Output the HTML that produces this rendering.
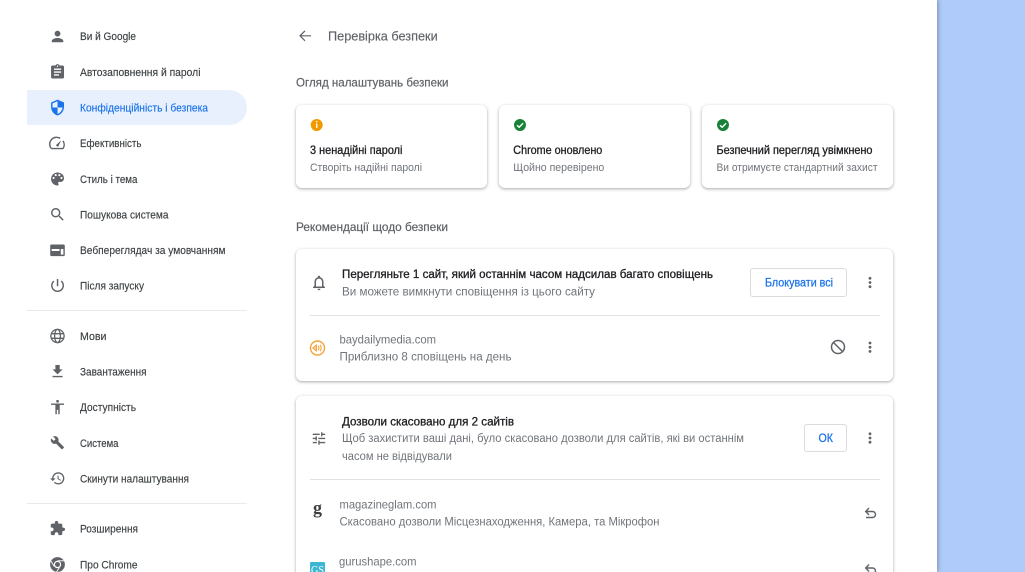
<!DOCTYPE html>
<html lang="uk"><head><meta charset="utf-8"><title>Перевірка безпеки</title>
<style>
html,body{margin:0;padding:0;width:1025px;height:572px;overflow:hidden;background:#aecbfa}
#page{position:absolute;left:0;top:0;width:937px;height:572px;background:#fff;box-shadow:1px 0 4px rgba(60,64,67,.45);overflow:hidden}
.c{position:absolute;background:#fff;border-radius:6px;box-shadow:0 1px 3px 1px rgba(60,64,67,.12),0 1px 2px rgba(60,64,67,.3)}
.sel{position:absolute;left:27px;top:90px;width:220px;height:35px;background:#e8f0fe;border-radius:0 18px 18px 0}
.hr{position:absolute;height:1px;background:#e8eaed}
.b{position:absolute;border:1px solid #dadce0;border-radius:3px;box-sizing:border-box;background:#fff}
svg{position:absolute;left:0;top:0;filter:blur(.25px)}
text{font-family:"Liberation Sans","Noto Sans CJK SC",sans-serif;font-size:10.5px}
.n{fill:#3c4043;font-size:11px;stroke:#3c4043;stroke-width:.15px}
.g{fill:#5f6368;font-size:12px}
.t{fill:#202124;font-size:11.5px;stroke:#202124;stroke-width:.3px}
.s{fill:#70757a;font-size:11px}
.i{fill:#5f6368}
</style></head><body>
<div id="page">
<div class="sel"></div>
<div class="hr" style="left:27px;top:310px;width:220px"></div>
<div class="hr" style="left:27px;top:503px;width:220px"></div>
<div class="c" style="left:296px;top:105px;width:191px;height:83px"></div>
<div class="c" style="left:499px;top:105px;width:191px;height:83px"></div>
<div class="c" style="left:702px;top:105px;width:191px;height:83px"></div>
<div class="c" style="left:296px;top:249px;width:597px;height:132px"></div>
<div class="c" style="left:296px;top:396px;width:597px;height:200px"></div>
<div class="hr" style="left:310px;top:315px;width:569.5px;background:#e0e2e6"></div>
<div class="hr" style="left:310px;top:479px;width:569.5px;background:#e0e2e6"></div>
<div class="b" style="left:750px;top:268px;width:97px;height:28.5px"></div>
<div class="b" style="left:804px;top:424px;width:43px;height:28px"></div>
<svg width="937" height="572" viewBox="0 0 937 572">
<!-- nav text -->
<text class="n" x="80" y="40" textLength="56" lengthAdjust="spacingAndGlyphs">Ви й Google</text>
<text class="n" x="80" y="76" textLength="120.5" lengthAdjust="spacingAndGlyphs">Автозаповнення й паролі</text>
<text class="n" x="80" y="111.5" textLength="128" lengthAdjust="spacingAndGlyphs" style="fill:#1a73e8;stroke:#1a73e8">Конфіденційність і безпека</text>
<text class="n" x="80" y="147" textLength="61.5" lengthAdjust="spacingAndGlyphs">Ефективність</text>
<text class="n" x="80" y="183" textLength="57.5" lengthAdjust="spacingAndGlyphs">Стиль і тема</text>
<text class="n" x="80" y="218.5" textLength="88.5" lengthAdjust="spacingAndGlyphs">Пошукова система</text>
<text class="n" x="80" y="254" textLength="145.5" lengthAdjust="spacingAndGlyphs">Вебпереглядач за умовчанням</text>
<text class="n" x="80" y="289.5" textLength="64" lengthAdjust="spacingAndGlyphs">Після запуску</text>
<text class="n" x="80" y="340" textLength="26.5" lengthAdjust="spacingAndGlyphs">Мови</text>
<text class="n" x="80" y="375.5" textLength="66.5" lengthAdjust="spacingAndGlyphs">Завантаження</text>
<text class="n" x="80" y="411" textLength="56" lengthAdjust="spacingAndGlyphs">Доступність</text>
<text class="n" x="80" y="447" textLength="38.5" lengthAdjust="spacingAndGlyphs">Система</text>
<text class="n" x="80" y="482.5" textLength="109" lengthAdjust="spacingAndGlyphs">Скинути налаштування</text>
<text class="n" x="80" y="532.5" textLength="58" lengthAdjust="spacingAndGlyphs">Розширення</text>
<text class="n" x="80" y="568.5" textLength="57.5" lengthAdjust="spacingAndGlyphs">Про Chrome</text>
<!-- nav icons -->
<g class="i">
<path transform="translate(48.9,27.9) scale(.72)" d="M12 12c2.21 0 4-1.79 4-4s-1.79-4-4-4-4 1.79-4 4 1.79 4 4 4zm0 2c-2.67 0-8 1.34-8 4v2h16v-2c0-2.66-5.33-4-8-4z"/>
<path transform="translate(48.9,63.4) scale(.72)" d="M19 3h-4.18C14.4 1.84 13.3 1 12 1c-1.3 0-2.4.84-2.82 2H5c-1.1 0-2 .9-2 2v14c0 1.1.9 2 2 2h14c1.1 0 2-.9 2-2V5c0-1.1-.9-2-2-2zm-7 0c.55 0 1 .45 1 1s-.45 1-1 1-1-.45-1-1 .45-1 1-1zm2 14H7v-2h7v2zm3-4H7v-2h10v2zm0-4H7V7h10v2z"/>
<path transform="translate(48.9,98.9) scale(.72)" fill="#1a73e8" d="M12 1L3 5v6c0 5.55 3.84 10.74 9 12 5.16-1.26 9-6.45 9-12V5l-9-4zm0 10.99h7c-.53 4.12-3.28 7.79-7 8.94V12H5V6.3l7-3.11v8.8z"/>
<path fill="none" stroke="#5f6368" stroke-width="1.4" d="M51.4 148.6H63M51.4 148.6A6.8 6.8 0 0 1 60.2 138.4M63 140.9A6.8 6.8 0 0 1 63 148.6"/>
<path d="M55.8 145.2 L61.2 140.4 L58 147 Z"/>
<path transform="translate(48.9,170.4) scale(.72)" d="M12 3c-4.97 0-9 4.03-9 9s4.03 9 9 9c.83 0 1.5-.67 1.5-1.5 0-.39-.15-.74-.39-1.01-.23-.26-.38-.61-.38-.99 0-.83.67-1.5 1.5-1.5H16c2.76 0 5-2.24 5-5 0-4.42-4.03-8-9-8zm-5.5 9c-.83 0-1.5-.67-1.5-1.5S5.67 9 6.5 9 8 9.67 8 10.5 7.33 12 6.5 12zm3-4C8.67 8 8 7.33 8 6.5S8.67 5 9.5 5s1.5.67 1.5 1.5S10.33 8 9.5 8zm5 0c-.83 0-1.5-.67-1.5-1.5S13.67 5 14.5 5s1.5.67 1.5 1.5S15.33 8 14.5 8zm3 4c-.83 0-1.5-.67-1.5-1.5S16.67 9 17.5 9s1.5.67 1.5 1.5-.67 1.5-1.5 1.5z"/>
<path transform="translate(48.9,205.9) scale(.72)" d="M15.5 14h-.79l-.28-.27C15.41 12.59 16 11.11 16 9.5 16 5.91 13.09 3 9.5 3S3 5.91 3 9.5 5.91 16 9.5 16c1.61 0 3.09-.59 4.23-1.57l.27.28v.79l5 4.99L20.49 19l-4.99-5zm-6 0C7.01 14 5 11.99 5 9.5S7.01 5 9.5 5 14 7.01 14 9.5 11.99 14 9.5 14z"/>
<path fill-rule="evenodd" d="M51.5 244.5h12a1.3 1.3 0 0 1 1.3 1.3v9a1.3 1.3 0 0 1-1.3 1.3h-12a1.3 1.3 0 0 1-1.3-1.3v-9a1.3 1.3 0 0 1 1.3-1.3zM51.7 249v2h7.8v-2zM60.8 249v5.6h2.6V249z"/>
<path transform="translate(48.9,276.9) scale(.72)" d="M13 3h-2v10h2V3zm4.83 2.17l-1.42 1.42C17.99 7.86 19 9.81 19 12c0 3.87-3.13 7-7 7s-7-3.13-7-7c0-2.19 1.01-4.14 2.58-5.42L6.17 5.17C4.23 6.82 3 9.26 3 12c0 4.97 4.03 9 9 9s9-4.03 9-9c0-2.74-1.23-5.18-3.17-6.83z"/>
<g fill="none" stroke="#5f6368" stroke-width="1.3"><circle cx="57.5" cy="336" r="6.6"/><ellipse cx="57.5" cy="336" rx="2.9" ry="6.6"/><path d="M51 333.7h13M51 338.3h13"/></g>
<path transform="translate(48.9,362.9) scale(.72)" d="M19 9h-4V3H9v6H5l7 7 7-7zM5 18v2h14v-2H5z"/>
<path transform="translate(48.9,398.4) scale(.72)" d="M12 2c1.1 0 2 .9 2 2s-.9 2-2 2-2-.9-2-2 .9-2 2-2zm9 7h-6v13h-2v-6h-2v6H9V9H3V7h18v2z"/>
<path transform="translate(50.2,435.5) scale(.6)" d="M22.7 19l-9.1-9.1c.9-2.3.4-5-1.5-6.9-2-2-5-2.4-7.4-1.3L9 6 6 9 1.6 4.7C.4 7.1.9 10.1 2.9 12.1c1.9 1.9 4.6 2.4 6.9 1.5l9.1 9.1c.4.4 1 .4 1.4 0l2.3-2.3c.5-.4.5-1.1.1-1.4z"/>
<path transform="translate(49.4,470.2) scale(.68)" d="M13 3c-4.97 0-9 4.03-9 9H1l3.89 3.89.07.14L9 12H6c0-3.87 3.13-7 7-7s7 3.13 7 7-3.13 7-7 7c-1.93 0-3.68-.79-4.94-2.06l-1.42 1.42C8.27 19.99 10.51 21 13 21c4.97 0 9-4.03 9-9s-4.03-9-9-9zm-1 5v5l4.28 2.54.72-1.21-3.5-2.08V8H12z"/>
<path transform="translate(49.4,520.2) scale(.68)" d="M20.5 11H19V7c0-1.1-.9-2-2-2h-4V3.5C13 2.12 11.88 1 10.5 1S8 2.12 8 3.5V5H4c-1.1 0-1.99.9-1.99 2v3.8H3.5c1.49 0 2.7 1.21 2.7 2.7s-1.21 2.7-2.7 2.7H2V20c0 1.1.9 2 2 2h3.8v-1.5c0-1.49 1.21-2.7 2.7-2.7 1.49 0 2.7 1.21 2.7 2.7V22H17c1.1 0 2-.9 2-2v-4h1.5c1.38 0 2.5-1.12 2.5-2.5S21.88 11 20.5 11z"/>
<circle cx="57.5" cy="564.5" r="7.4"/><circle cx="57.5" cy="564.5" r="3.7" fill="#fff"/><circle cx="57.5" cy="564.5" r="2.5"/>
<path d="M57.5 560.8h7" stroke="#fff" stroke-width=".9"/><path d="M54.2 566.4l-3.4-5.6" stroke="#fff" stroke-width=".9"/><path d="M59.3 567.7l-3.5 5.4" stroke="#fff" stroke-width=".9"/>
</g>
<!-- header -->
<path fill="none" stroke="#5f6368" stroke-width="1.2" d="M311 35.8H300.2M305 30.8l-5 5 5 5"/>
<text class="g" x="328" y="40.3" textLength="109.7" lengthAdjust="spacingAndGlyphs" style="font-size:12.5px;stroke:#5f6368;stroke-width:.15px">Перевірка безпеки</text>
<text class="g" x="296" y="86.7" textLength="152.5" lengthAdjust="spacingAndGlyphs" style="stroke:#5f6368;stroke-width:.2px">Огляд налаштувань безпеки</text>
<text class="g" x="296" y="231" textLength="152" lengthAdjust="spacingAndGlyphs" style="stroke:#5f6368;stroke-width:.2px">Рекомендації щодо безпеки</text>
<!-- summary cards -->
<circle cx="316.7" cy="125" r="6" fill="#f29900"/><path d="M316.7 121.6v.01" stroke="#fff" stroke-width="1.5" stroke-linecap="round"/><rect x="316" y="123.5" width="1.4" height="4.4" fill="#fff"/>
<text class="t" x="310" y="154" textLength="92.5" lengthAdjust="spacingAndGlyphs">3 ненадійні паролі</text>
<text class="s" x="310" y="171" textLength="112" lengthAdjust="spacingAndGlyphs">Створіть надійні паролі</text>
<circle cx="520" cy="125" r="6" fill="#188038"/><path d="M517 125.2l2.1 2.1 4-4" fill="none" stroke="#fff" stroke-width="1.4"/>
<text class="t" x="513.3" y="154" textLength="89" lengthAdjust="spacingAndGlyphs">Chrome оновлено</text>
<text class="s" x="513.3" y="171" textLength="91" lengthAdjust="spacingAndGlyphs">Щойно перевірено</text>
<circle cx="723" cy="125" r="6" fill="#188038"/><path d="M720 125.2l2.1 2.1 4-4" fill="none" stroke="#fff" stroke-width="1.4"/>
<text class="t" x="716.5" y="154" textLength="156" lengthAdjust="spacingAndGlyphs">Безпечний перегляд увімкнено</text>
<text class="s" x="716.5" y="171" textLength="161" lengthAdjust="spacingAndGlyphs">Ви отримуєте стандартний захист</text>
<!-- notifications card -->
<path class="i" transform="translate(310,273.8) scale(.75)" d="M12 22c1.1 0 2-.9 2-2h-4c0 1.1.9 2 2 2zm6-6v-5c0-3.07-1.63-5.64-4.5-6.32V4c0-.83-.67-1.5-1.5-1.5s-1.5.67-1.5 1.5v.68C7.64 5.36 6 7.92 6 11v5l-2 2v1h16v-1l-2-2zm-2 1H8v-6c0-2.48 1.51-4.5 4-4.5s4 2.02 4 4.5v6z"/>
<text class="t" x="342" y="278" textLength="371" lengthAdjust="spacingAndGlyphs">Перегляньте 1 сайт, який останнім часом надсилав багато сповіщень</text>
<text class="s" x="342" y="295.5" textLength="253" lengthAdjust="spacingAndGlyphs" style="font-size:11.5px">Ви можете вимкнути сповіщення із цього сайту</text>
<text x="765" y="286.5" textLength="68" lengthAdjust="spacingAndGlyphs" style="fill:#1a73e8;stroke:#1a73e8;stroke-width:.25px;font-size:11.5px">Блокувати всі</text>
<g fill="#5f6368"><circle cx="870" cy="278.3" r="1.4"/><circle cx="870" cy="282.5" r="1.4"/><circle cx="870" cy="286.7" r="1.4"/>
<circle cx="870" cy="343" r="1.4"/><circle cx="870" cy="347.2" r="1.4"/><circle cx="870" cy="351.4" r="1.4"/>
<circle cx="870" cy="433.8" r="1.4"/><circle cx="870" cy="438" r="1.4"/><circle cx="870" cy="442.2" r="1.4"/></g>
<circle cx="317.5" cy="348" r="7" fill="none" stroke="#f5a33c" stroke-width="1.4"/>
<path d="M312.8 348l3.6-2.9v5.8z" fill="#fbd49b" stroke="#f5a33c" stroke-width="1.1"/><path d="M318.2 345.6q1.5 2.4 0 4.8M320.2 344.8q2 3.2 0 6.4" fill="none" stroke="#f5a33c" stroke-width="1.1"/>
<text class="s" x="339.5" y="343.5" textLength="96.5" lengthAdjust="spacingAndGlyphs" style="font-size:12px">baydailymedia.com</text>
<text class="s" x="339.5" y="360.5" textLength="172" lengthAdjust="spacingAndGlyphs" style="font-size:11.5px">Приблизно 8 сповіщень на день</text>
<circle cx="838" cy="347" r="6.5" fill="none" stroke="#5f6368" stroke-width="1.5"/><path d="M833.5 342.5l9 9" stroke="#5f6368" stroke-width="1.5"/>
<!-- permissions card -->
<path class="i" transform="translate(310.7,430.2) scale(.69)" d="M3 17v2h6v-2H3zM3 5v2h10V5H3zm10 16v-2h8v-2h-8v-2h-2v6h2zM7 9v2H3v2h4v2h2V9H7zm14 4v-2H11v2h10zm-6-4h2V7h4V5h-4V3h-2v6z"/>
<text class="t" x="342" y="425.5" textLength="172" lengthAdjust="spacingAndGlyphs">Дозволи скасовано для 2 сайтів</text>
<text class="s" x="342" y="442" textLength="402" lengthAdjust="spacingAndGlyphs" style="font-size:11.5px">Щоб захистити ваші дані, було скасовано дозволи для сайтів, які ви останнім</text>
<text class="s" x="342" y="460" textLength="110" lengthAdjust="spacingAndGlyphs" style="font-size:11.5px">часом не відвідували</text>
<text x="818.5" y="442" textLength="14.5" lengthAdjust="spacingAndGlyphs" style="fill:#1a73e8;stroke:#1a73e8;stroke-width:.25px;font-size:11.5px">ОК</text>
<text x="313" y="513.5" style="font-family:'Liberation Serif',serif;font-size:18px;font-weight:700;fill:#3c4043">g</text>
<text class="s" x="339.5" y="508.5" textLength="97" lengthAdjust="spacingAndGlyphs" style="font-size:12px">magazineglam.com</text>
<text class="s" x="339.5" y="525.5" textLength="320" lengthAdjust="spacingAndGlyphs" style="font-size:11.5px">Скасовано дозволи Місцезнаходження, Камера, та Мікрофон</text>
<path d="M866 511.5h6.5a3 3 0 0 1 0 6h-6.5M869 508l-3.3 3.5 3.3 3.5" fill="none" stroke="#5f6368" stroke-width="1.4"/>
<rect x="310" y="562" width="15" height="15" rx="1" fill="#3bb6d3"/>
<text x="311" y="573.5" textLength="13" lengthAdjust="spacingAndGlyphs" style="font-family:'Liberation Serif',serif;font-size:12px;fill:#fff">GS</text>
<text class="s" x="339" y="565.5" textLength="77.5" lengthAdjust="spacingAndGlyphs" style="font-size:12px">gurushape.com</text>
<path d="M866 568h6.5a3 3 0 0 1 0 6h-6.5M869 564.5l-3.3 3.5 3.3 3.5" fill="none" stroke="#5f6368" stroke-width="1.4"/>
</svg>
</div>
</body></html>
